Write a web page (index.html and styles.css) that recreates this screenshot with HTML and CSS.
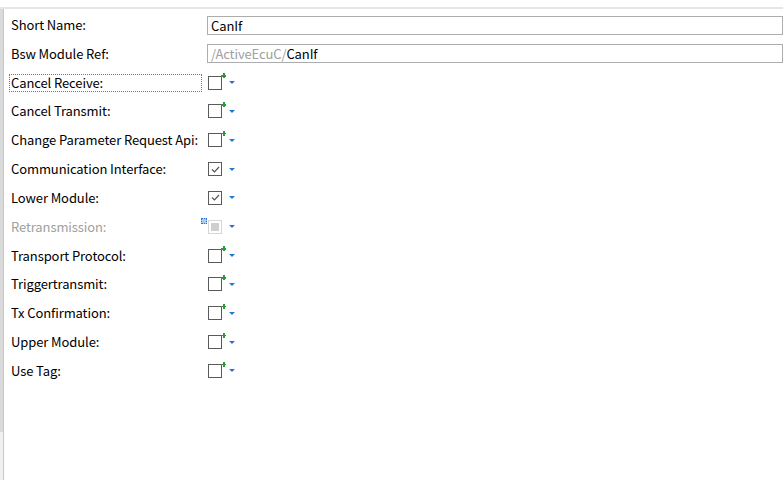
FILE: index.html
```html
<!DOCTYPE html>
<html>
<head>
<meta charset="utf-8">
<link rel="stylesheet" href="styles.css">
</head>
<body>
<div class="page">
  <div class="topline"></div>
  <div class="main">
    <div class="leftbar"><div class="thumb"></div></div>
    <div class="form">
      <div class="row"><span class="label">Short Name:</span><div class="ctrl"><div class="field">CanIf</div></div></div>
      <div class="row"><span class="label">Bsw Module Ref:</span><div class="ctrl"><div class="field ref"><span class="dim">/ActiveEcuC/</span>CanIf</div></div></div>
      <div class="row"><span class="label focus">Cancel Receive:</span><div class="ctrl"><span class="cb"></span><span class="star"></span><span class="tri"></span></div></div>
      <div class="row"><span class="label">Cancel Transmit:</span><div class="ctrl"><span class="cb"></span><span class="star"></span><span class="tri"></span></div></div>
      <div class="row"><span class="label">Change Parameter Request Api:</span><div class="ctrl"><span class="cb"></span><span class="star"></span><span class="tri"></span></div></div>
      <div class="row"><span class="label">Communication Interface:</span><div class="ctrl"><span class="cb checked"><svg width="11" height="11" viewBox="0 0 11 11"><path d="M2 5.5 L4.5 8 L9 3" fill="none" stroke="#555" stroke-width="1.2"/></svg></span><span class="nostar"></span><span class="tri"></span></div></div>
      <div class="row"><span class="label">Lower Module:</span><div class="ctrl"><span class="cb checked"><svg width="11" height="11" viewBox="0 0 11 11"><path d="M2 5.5 L4.5 8 L9 3" fill="none" stroke="#555" stroke-width="1.2"/></svg></span><span class="nostar"></span><span class="tri"></span></div></div>
      <div class="row"><span class="label disabled">Retransmission:</span><div class="ctrl"><span class="grid"></span><span class="cb off"><span class="fill"></span></span><span class="nostar"></span><span class="tri"></span></div></div>
      <div class="row"><span class="label">Transport Protocol:</span><div class="ctrl"><span class="cb"></span><span class="star"></span><span class="tri"></span></div></div>
      <div class="row"><span class="label">Triggertransmit:</span><div class="ctrl"><span class="cb"></span><span class="star"></span><span class="tri"></span></div></div>
      <div class="row"><span class="label">Tx Confirmation:</span><div class="ctrl"><span class="cb"></span><span class="star"></span><span class="tri"></span></div></div>
      <div class="row"><span class="label">Upper Module:</span><div class="ctrl"><span class="cb"></span><span class="star"></span><span class="tri"></span></div></div>
      <div class="row"><span class="label">Use Tag:</span><div class="ctrl"><span class="cb"></span><span class="star"></span><span class="tri"></span></div></div>
    </div>
  </div>
</div>
</body>
</html>
```

FILE: styles.css
```css
* { box-sizing: border-box; }
html, body { margin: 0; padding: 0; background: #fff; overflow: hidden; }
body { width: 783px; height: 480px; font-family: "Noto Sans CJK SC", "Noto Sans", sans-serif; font-size: 13px; letter-spacing: -0.1px; color: #000; }
.page { display: flex; flex-direction: column; height: 480px; }
.topline { height: 9px; border-bottom: 2px solid #e6e6e6; flex: none; }
.main { flex: 1; display: flex; min-height: 0; }
.leftbar { width: 4px; background: #f0f0f0; border-right: 1px solid #c8c8c8; flex: none; }
.thumb { width: 3px; height: 423px; background: #dadada; }
.form { flex: 1; padding: 1.6px 0 0 7px; display: flex; flex-direction: column; min-width: 0; }
.row { height: 28.83px; display: flex; align-items: center; }
.label { width: 196px; flex: none; line-height: 16px; height: 16px; white-space: nowrap; }
.label.focus { outline: 1px dotted #777; margin-left: -1px; padding-left: 1px; width: 191px; margin-right: 6px; }
.label.disabled { color: #a0a0a0; }
.ctrl { flex: 1; display: flex; align-items: center; min-width: 0; position: relative; height: 100%; }
.field { width: calc(100% + 20px); height: 19px; border: 1px solid #adadad; line-height: 17px; padding-left: 3px; background: #fff; color: #000; }
.dim { color: #a0a0a0; }
.cb { width: 14px; height: 14px; border: 1px solid #5a5a5a; background: #fff; margin-left: 1px; display: flex; align-items: center; justify-content: center; }
.cb.off { border-color: #d6d6d6; }
.fill { width: 8px; height: 8px; background: #cfcfcf; }
.star { width: 5px; height: 5px; margin-left: -1px; align-self: flex-start; margin-top: 5px; position: relative; }
.star::before, .star::after { content: ""; position: absolute; background: #2a9a3a; }
.star::before { left: 2px; top: 0; width: 1.5px; height: 5px; }
.star::after { left: 0; top: 2px; width: 5px; height: 1.5px; }
.nostar { width: 4px; }
.tri { width: 0; height: 0; border-left: 3px solid transparent; border-right: 3px solid transparent; border-top: 3px solid #1e78d0; margin-left: 3px; }
.grid { position: absolute; left: -6px; top: 6px; width: 6px; height: 6px; border: 1px dotted #2f78d0; background: #a9cbf0; }
```
